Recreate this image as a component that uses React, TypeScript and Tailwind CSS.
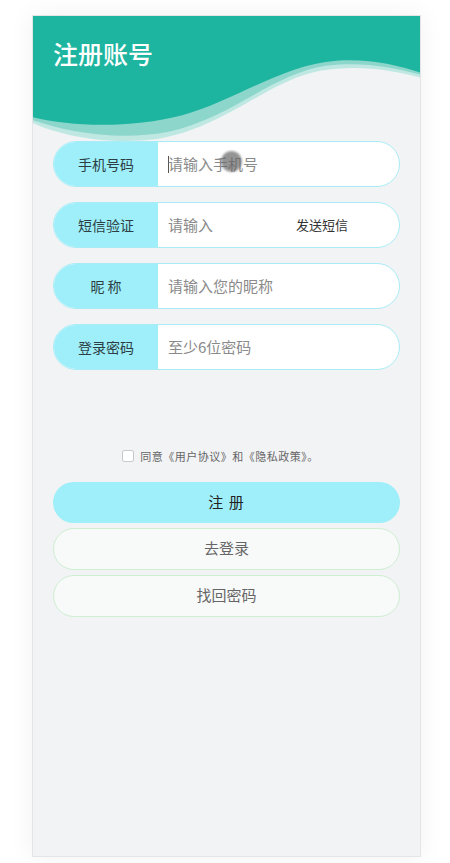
import { useState } from "react";

const fields = [
  { label: "手机号码", placeholder: "请输入手机号" },
  { label: "短信验证", placeholder: "请输入", sms: true },
  { label: "昵 称", placeholder: "请输入您的昵称" },
  { label: "登录密码", placeholder: "至少6位密码" },
];

function Wave() {
  return (
    <svg className="absolute inset-0 w-full h-full" viewBox="0 0 389 126" preserveAspectRatio="none">
      <path
        d="M0 0 H389 V62 C360 54 325 49 290 55 C235 65 195 112 125 124 C75 130 30 121 0 108 Z"
        fill="#bfe8e3"
      />
      <path
        d="M0 0 H389 V59 C360 51 330 46 296 50 C240 58 200 103 135 117 C85 126 35 117 0 105 Z"
        fill="#8dd6cb"
      />
      <path
        d="M0 0 H389 V57 C368 50 340 43 305 45 C250 49 205 85 150 100 C100 113 40 112 0 102 Z"
        fill="#1eb5a0"
      />
    </svg>
  );
}

export default function App() {
  const [agree, setAgree] = useState(false);

  return (
    <div className="min-h-[863px] bg-white pt-[15px] pb-[6px]" style={{ fontFamily: '"Noto Sans CJK SC", "Noto Sans", sans-serif' }}>
      <div className="ml-[32px] w-[389px] h-[842px] bg-[#f2f3f5] border border-[#e4e5e7] shadow-[0_0_24px_rgba(0,0,0,0.06)]">
        {/* Header */}
        <div className="relative h-[125px]">
          <Wave />
          <h1 className="relative pl-[20px] pt-[20px] text-[25px] leading-[34px] font-medium text-white">注册账号</h1>
        </div>

        {/* Form */}
        <div className="px-[20px] flex flex-col gap-[15px]">
          {fields.map((f, i) => (
            <div key={f.label} className="relative flex h-[46px] rounded-full border border-[#a9ecf6] bg-white overflow-hidden">
              <div className="w-[104px] shrink-0 bg-[#9eeffa] flex items-center justify-center text-[14px] text-[#2c3e43]">
                {f.label}
              </div>
              <div className="flex-1 flex items-center pl-[10px]">
                {i === 0 && <span className="w-px h-[17px] bg-[#555] -mr-px" />}
                <input
                  placeholder={f.placeholder}
                  className="flex-1 min-w-0 bg-transparent outline-none text-[15px] text-[#333] placeholder:text-[#8a8a8a]"
                />
                {f.sms && <span className="pr-[61px] text-[13px] text-[#333]">发送短信</span>}
              </div>
              {i === 0 && (
                <span className="absolute left-[167px] top-[9px] w-[21px] h-[21px] rounded-full bg-[#666]/70 blur-[1px]" />
              )}
            </div>
          ))}
        </div>

        {/* Agreement */}
        <div className="mt-[78px] flex items-center justify-center gap-[6px] pr-[12px]">
          <button
            onClick={() => setAgree(!agree)}
            className={`w-[12px] h-[12px] rounded-[2px] border border-[#c9c9c9] ${agree ? "bg-[#1eb5a0]" : "bg-white"}`}
          />
          <span className="text-[11px] tracking-[0.5px] text-[#666]">同意《用户协议》和《隐私政策》。</span>
        </div>

        {/* Buttons */}
        <div className="px-[20px] mt-[17px] flex flex-col gap-[5px]">
          <button className="h-[41px] rounded-full bg-[#9eeffa] text-[15px] text-[#222] tracking-[1px]">注 册</button>
          <button className="h-[42px] rounded-full bg-[#f8f9f9] border border-[#cdefd2] text-[15px] text-[#666]">去登录</button>
          <button className="h-[42px] rounded-full bg-[#f8f9f9] border border-[#cdefd2] text-[15px] text-[#666]">找回密码</button>
        </div>
      </div>
    </div>
  );
}
